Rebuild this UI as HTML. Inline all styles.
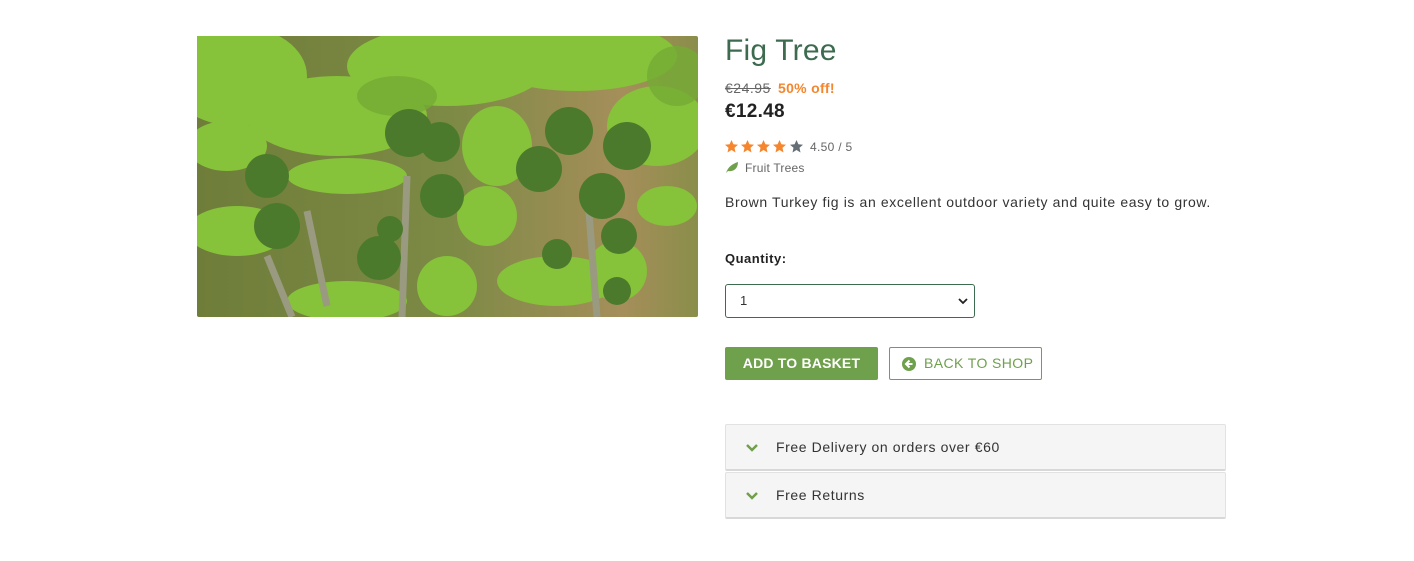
<!DOCTYPE html>
<html><head><meta charset="utf-8"><style>
*{box-sizing:border-box;margin:0;padding:0}
body{width:1414px;height:561px;background:#fff;font-family:"Liberation Sans",sans-serif;color:#333;position:relative;overflow:hidden}
.abs{position:absolute}
h1{position:absolute;left:725px;top:34px;font-size:30px;font-weight:400;color:#3d6b4f;letter-spacing:0.2px}
.old{left:725px;top:80px;font-size:14px;color:#666;text-decoration:line-through;letter-spacing:0.5px}
.off{left:778px;top:80px;font-size:14px;font-weight:700;color:#f5862e;letter-spacing:0.3px}
.price{left:725px;top:101px;font-size:19px;font-weight:700;color:#222;letter-spacing:0.3px}
.rating{left:810px;top:140px;font-size:12px;color:#666;letter-spacing:0.3px}
.cat{left:745px;top:161px;font-size:12px;color:#666;letter-spacing:0.2px}
.desc{left:725px;top:194px;font-size:14px;color:#333;letter-spacing:0.62px}
.ql{left:725px;top:251px;font-size:13px;font-weight:700;color:#222;letter-spacing:0.5px}
.sel{left:725px;top:284px;width:250px;height:34px;border:1px solid #3d6b4f;border-radius:3px;font-size:13px;padding:8px 14px;color:#333}
.btn1{left:725px;top:347px;width:153px;height:33px;background:#6fa04c;border-radius:2px;color:#fff;font-size:14px;font-weight:700;text-align:center;line-height:33px;letter-spacing:0.2px}
.btn2{left:889px;top:347px;width:153px;height:33px;border:1px solid #6fa04c;border-radius:2px;color:#6fa04c;font-size:14px;line-height:31px;padding-left:34px;letter-spacing:0.4px}
.acc{left:725px;width:501px;height:47px;background:#f5f5f5;border:1px solid #e2e2e2;border-bottom:2px solid #d8d8d8;border-radius:2px;font-size:14px;color:#333;line-height:45px;padding-left:50px;letter-spacing:0.6px}
</style></head><body>
<svg class="abs" style="left:197px;top:36px" width="501" height="281" viewBox="0 0 501 281">
<defs><linearGradient id="bg" x1="0" x2="1"><stop offset="0" stop-color="#6f7d3a"/><stop offset=".5" stop-color="#7c8a45"/><stop offset=".85" stop-color="#a58e5a"/><stop offset="1" stop-color="#8a8e4a"/></linearGradient></defs>
<rect width="501" height="281" rx="2" fill="url(#bg)"/>
<g fill="#86c23a">
<ellipse cx="40" cy="40" rx="70" ry="50"/><ellipse cx="140" cy="80" rx="90" ry="40"/><ellipse cx="250" cy="30" rx="100" ry="40"/>
<ellipse cx="380" cy="20" rx="100" ry="35"/><ellipse cx="300" cy="110" rx="35" ry="40"/><ellipse cx="460" cy="90" rx="50" ry="40"/>
<ellipse cx="150" cy="140" rx="60" ry="18"/><ellipse cx="40" cy="195" rx="50" ry="25"/><ellipse cx="290" cy="180" rx="30" ry="30"/>
<ellipse cx="360" cy="245" rx="60" ry="25"/><ellipse cx="150" cy="265" rx="60" ry="20"/><ellipse cx="420" cy="235" rx="30" ry="30"/>
<ellipse cx="30" cy="110" rx="40" ry="25"/><ellipse cx="250" cy="250" rx="30" ry="30"/><ellipse cx="470" cy="170" rx="30" ry="20"/>
</g>
<g fill="#74ab34" opacity=".8"><ellipse cx="480" cy="40" rx="30" ry="30"/><ellipse cx="200" cy="60" rx="40" ry="20"/></g>
<g stroke="#9a9a80" stroke-width="7" fill="none"><path d="M110 175 L130 270"/><path d="M210 140 L205 281"/><path d="M70 220 L95 281"/><path d="M390 150 L400 281"/></g>
<g fill="#4c7a2c">
<circle cx="212" cy="97" r="24"/><circle cx="243" cy="106" r="20"/><circle cx="245" cy="160" r="22"/><circle cx="182" cy="222" r="22"/>
<circle cx="193" cy="193" r="13"/><circle cx="80" cy="190" r="23"/><circle cx="70" cy="140" r="22"/><circle cx="372" cy="95" r="24"/>
<circle cx="342" cy="133" r="23"/><circle cx="405" cy="160" r="23"/><circle cx="430" cy="110" r="24"/><circle cx="422" cy="200" r="18"/>
<circle cx="360" cy="218" r="15"/><circle cx="420" cy="255" r="14"/>
</g>
</svg>
<h1>Fig Tree</h1>
<div class="abs old">€24.95</div><div class="abs off">50% off!</div>
<div class="abs price">€12.48</div>
<svg class="abs" style="left:725px;top:140px" width="80" height="13" viewBox="0 0 80 13">
<defs><path id="st" d="M6.5 0 L8.4 4.3 L13 4.7 L9.5 7.8 L10.5 12.5 L6.5 10 L2.5 12.5 L3.5 7.8 L0 4.7 L4.6 4.3 Z"/></defs>
<use href="#st" fill="#f5862e"/><use href="#st" x="16" fill="#f5862e"/><use href="#st" x="32" fill="#f5862e"/><use href="#st" x="48" fill="#f5862e"/><use href="#st" x="65" fill="#666e76"/>
</svg>
<div class="abs rating">4.50 / 5</div>
<svg class="abs" style="left:725px;top:161px" width="14" height="13" viewBox="0 0 14 13"><path d="M1 12 C3 6 7 3 13 1 C13 8 8 11 3 10 Z" fill="#6fa04c"/></svg>
<div class="abs cat">Fruit Trees</div>
<div class="abs desc">Brown Turkey fig is an excellent outdoor variety and quite easy to grow.</div>
<div class="abs ql">Quantity:</div>
<div class="abs sel">1<svg style="position:absolute;right:6px;top:12px" width="10" height="8" viewBox="0 0 10 8"><path d="M1 2 L5 6 L9 2" stroke="#222" stroke-width="1.8" fill="none"/></svg></div>
<div class="abs btn1">ADD TO BASKET</div>
<div class="abs btn2"><svg style="position:absolute;left:12px;top:9px" width="14" height="14" viewBox="0 0 14 14"><circle cx="7" cy="7" r="7" fill="#6fa04c"/><path d="M7.5 3.5 L4 7 L7.5 10.5 M4 7 H10.5" stroke="#fff" stroke-width="2" fill="none"/></svg>BACK TO SHOP</div>
<div class="abs acc" style="top:424px"><svg style="position:absolute;left:19px;top:18px" width="14" height="10" viewBox="0 0 14 10"><path d="M2 2 L7 7 L12 2" stroke="#6fa04c" stroke-width="2.5" fill="none"/></svg>Free Delivery on orders over €60</div>
<div class="abs acc" style="top:472px"><svg style="position:absolute;left:19px;top:18px" width="14" height="10" viewBox="0 0 14 10"><path d="M2 2 L7 7 L12 2" stroke="#6fa04c" stroke-width="2.5" fill="none"/></svg>Free Returns</div>
</body></html>
